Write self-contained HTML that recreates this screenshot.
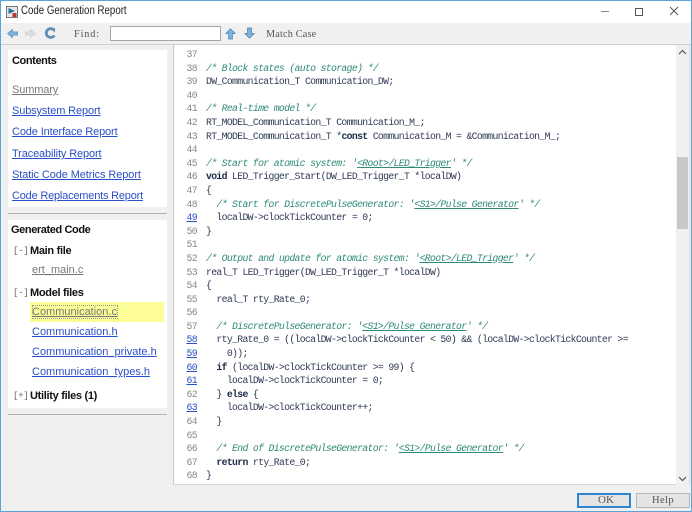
<!DOCTYPE html>
<html><head><meta charset="utf-8">
<style>
html,body{margin:0;padding:0}
body{width:692px;height:512px;overflow:hidden;position:relative;background:#f0f0f0;font-family:"Liberation Sans",sans-serif}
.a{position:absolute}
.s{position:absolute;white-space:pre;font-size:11px;line-height:14px;letter-spacing:-.13px;color:#1a1a1a}
.l{color:#2b4fc7;text-decoration:underline}
.g{color:#777;text-decoration:underline}
.b{font-weight:bold;color:#111;letter-spacing:-.3px}
.t{letter-spacing:0}
#n,#c{position:absolute;top:48px;font-family:"Liberation Mono",monospace;font-size:9.8px;line-height:13.6px;white-space:pre}
#n{left:176px;width:21px;text-align:right;color:#888;letter-spacing:-.6px}
#n a{color:#2b4fc7;text-decoration:underline}
#c{left:206px;color:#2f3a55;letter-spacing:-.67px}
#c i{color:#2f8a78}
#c i u{color:#2f8a78}
#c b{color:#1d2a4a}
.m{font-family:"Liberation Serif",serif;color:#555;font-size:10px;letter-spacing:.55px;white-space:pre;position:absolute}
</style></head><body>
<div class="a" style="left:0;top:0;width:692px;height:23px;background:#fff"></div>
<div class="a" style="left:0;top:44px;width:692px;height:1px;background:#d0d0d0"></div>

<svg class="a" style="left:6px;top:6px" width="12" height="12" viewBox="0 0 12 12"><rect x=".5" y=".5" width="11" height="11" fill="#e8e8e8" stroke="#777"/><path d="M2.5 2L9 5L2.5 8z" fill="#2a6f9e"/><rect x="6.5" y="7" width="4" height="4" fill="#b5382a"/></svg>
<div class="s" style="left:21px;top:4px;font-size:11.5px;line-height:15px;letter-spacing:0;color:#222;transform:scaleX(.843);transform-origin:0 0">Code Generation Report</div>

<div class="a" style="left:601px;top:11px;width:8px;height:1px;background:#888"></div>
<div class="a" style="left:635px;top:8px;width:6px;height:6px;border:1px solid #555"></div>
<svg class="a" style="left:669px;top:6px" width="10" height="10" viewBox="0 0 10 10"><path d="M1 1L9 9M9 1L1 9" stroke="#555" stroke-width="1" fill="none"/></svg>

<svg class="a" style="left:7px;top:28px" width="11" height="11" viewBox="0 0 11 11"><path d="M.5 5.5L5.5 1.5V3.8H10.5V7.2H5.5V9.5z" fill="#7cb3dc" stroke="#5a8cb4" stroke-width=".7"/></svg>
<svg class="a" style="left:25px;top:28px" width="11" height="11" viewBox="0 0 11 11"><path d="M10.5 5.5L5.5 1.5V3.8H.5V7.2H5.5V9.5z" fill="#dcdcdc" stroke="#cfcfcf" stroke-width=".7"/></svg>
<svg class="a" style="left:44px;top:27px" width="12" height="12" viewBox="0 0 12 12"><path d="M10.2 3.4A4.4 4.4 0 1 0 10.4 8.4" fill="none" stroke="#5d8fb8" stroke-width="2.8"/><path d="M6.5 1.2L11 1V5.5z" fill="#5d8fb8"/></svg>

<div class="m" style="left:74px;top:29px;font-size:10.2px;letter-spacing:.9px">Find:</div>
<div class="a" style="left:110px;top:26px;width:109px;height:13px;background:#fff;border:1px solid #a6a6a6"></div>
<svg class="a" style="left:225px;top:28px" width="11" height="12" viewBox="0 0 11 12"><path d="M5.5 .8L10.2 5.5H7.5V11H3.5V5.5H.8z" fill="#7cb3dc" stroke="#4f82a8" stroke-width=".7"/></svg>
<svg class="a" style="left:244px;top:27px" width="11" height="12" viewBox="0 0 11 12"><path d="M5.5 11.2L10.2 6.5H7.5V1H3.5V6.5H.8z" fill="#7cb3dc" stroke="#4f82a8" stroke-width=".7"/></svg>
<div class="m" style="left:266px;top:29px;font-size:10.2px;letter-spacing:.2px">Match Case</div>

<!-- left pane -->
<div class="a" style="left:8px;top:50px;width:159px;height:157px;background:#fff"></div>
<div class="a" style="left:8px;top:213px;width:159px;height:1px;background:#b0b0b0"></div>
<div class="a" style="left:8px;top:220px;width:159px;height:188px;background:#fff"></div>
<div class="a" style="left:8px;top:414px;width:159px;height:1px;background:#b0b0b0"></div>

<div class="s b" style="left:12px;top:54px;letter-spacing:-.4px">Contents</div>
<div class="s g" style="left:12px;top:83px">Summary</div>
<div class="s l" style="left:12px;top:104px">Subsystem Report</div>
<div class="s l" style="left:12px;top:125px">Code Interface Report</div>
<div class="s l" style="left:12px;top:147px">Traceability Report</div>
<div class="s l" style="left:12px;top:168px;letter-spacing:-.1px">Static Code Metrics Report</div>
<div class="s l" style="left:12px;top:189px;letter-spacing:-.2px">Code Replacements Report</div>

<div class="s b" style="left:11px;top:223px;letter-spacing:-.4px">Generated Code</div>
<div class="s" style="left:13px;top:244px;font-family:'Liberation Mono',monospace;font-size:9px;color:#666;letter-spacing:-.2px">[-]</div>
<div class="s b" style="left:30px;top:244px">Main file</div>
<div class="s g t" style="left:32px;top:263px">ert_main.c</div>
<div class="s" style="left:13px;top:286px;font-family:'Liberation Mono',monospace;font-size:9px;color:#666;letter-spacing:-.2px">[-]</div>
<div class="s b" style="left:30px;top:286px">Model files</div>
<div class="a" style="left:30px;top:302px;width:134px;height:20px;background:#fdfd96"></div>
<div class="a" style="left:32px;top:305px;width:86px;height:14px;border:1px dotted #999;box-sizing:border-box"></div>
<div class="s g t" style="left:32px;top:305px">Communication.c</div>
<div class="s l t" style="left:32px;top:325px">Communication.h</div>
<div class="s l t" style="left:32px;top:345px">Communication_private.h</div>
<div class="s l t" style="left:32px;top:365px">Communication_types.h</div>
<div class="s" style="left:13px;top:389px;font-family:'Liberation Mono',monospace;font-size:9px;color:#666;letter-spacing:-.2px">[+]</div>
<div class="s b" style="left:30px;top:389px">Utility files (1)</div>

<!-- code pane -->
<div class="a" style="left:173px;top:45px;width:503px;height:439px;background:#fff;border-left:1px solid #c8c8c8;border-bottom:1px solid #d8d8d8"></div>
<div class="a" style="left:676px;top:45px;width:12px;height:440px;background:#f0f0f0"></div>
<div class="a" style="left:689px;top:45px;width:1px;height:440px;background:#dcdcdc"></div>
<div class="a" style="left:677px;top:157px;width:11px;height:72px;background:#c8c8c8"></div>
<svg class="a" style="left:678px;top:49px" width="9" height="6" viewBox="0 0 9 6"><path d="M1 5L4.5 1.5L8 5" fill="none" stroke="#555" stroke-width="1.2"/></svg>
<svg class="a" style="left:678px;top:476px" width="9" height="6" viewBox="0 0 9 6"><path d="M1 1L4.5 4.5L8 1" fill="none" stroke="#555" stroke-width="1.2"/></svg>

<div id="n">37
38
39
40
41
42
43
44
45
46
47
48
<a>49</a>
50
51
52
53
54
55
56
57
<a>58</a>
<a>59</a>
<a>60</a>
<a>61</a>
62
<a>63</a>
64
65
66
67
68</div>
<div id="c">
<i>/* Block states (auto storage) */</i>
DW_Communication_T Communication_DW;

<i>/* Real-time model */</i>
RT_MODEL_Communication_T Communication_M_;
RT_MODEL_Communication_T *<b>const</b> Communication_M = &amp;Communication_M_;

<i>/* Start for atomic system: '<u>&lt;Root&gt;/LED_Trigger</u>' */</i>
<b>void</b> LED_Trigger_Start(DW_LED_Trigger_T *localDW)
{
  <i>/* Start for DiscretePulseGenerator: '<u>&lt;S1&gt;/Pulse Generator</u>' */</i>
  localDW-&gt;clockTickCounter = 0;
}

<i>/* Output and update for atomic system: '<u>&lt;Root&gt;/LED_Trigger</u>' */</i>
real_T LED_Trigger(DW_LED_Trigger_T *localDW)
{
  real_T rty_Rate_0;

  <i>/* DiscretePulseGenerator: '<u>&lt;S1&gt;/Pulse Generator</u>' */</i>
  rty_Rate_0 = ((localDW-&gt;clockTickCounter &lt; 50) &amp;&amp; (localDW-&gt;clockTickCounter &gt;=
    0));
  <b>if</b> (localDW-&gt;clockTickCounter &gt;= 99) {
    localDW-&gt;clockTickCounter = 0;
  } <b>else</b> {
    localDW-&gt;clockTickCounter++;
  }

  <i>/* End of DiscretePulseGenerator: '<u>&lt;S1&gt;/Pulse Generator</u>' */</i>
  <b>return</b> rty_Rate_0;
}</div>

<!-- bottom buttons -->
<div class="a" style="left:577px;top:493px;width:50px;height:11px;border:2px solid #2f86cf;background:#e4e4e4"></div>
<div class="m" style="left:598px;top:494px;font-size:11px;line-height:13px;letter-spacing:0">OK</div>
<div class="a" style="left:636px;top:493px;width:52px;height:13px;border:1px solid #b5b5b5;background:#e4e4e4"></div>
<div class="m" style="left:652px;top:494px;font-size:10.5px;line-height:13px;letter-spacing:.4px">Help</div>

<!-- window border -->
<div class="a" style="left:0;top:0;width:692px;height:1px;background:#5aa5dc"></div>
<div class="a" style="left:0;top:0;width:1px;height:512px;background:#5aa5dc"></div>
<div class="a" style="left:691px;top:0;width:1px;height:512px;background:#5aa5dc"></div>
<div class="a" style="left:0;top:511px;width:692px;height:1px;background:#5aa5dc"></div>
</body></html>
